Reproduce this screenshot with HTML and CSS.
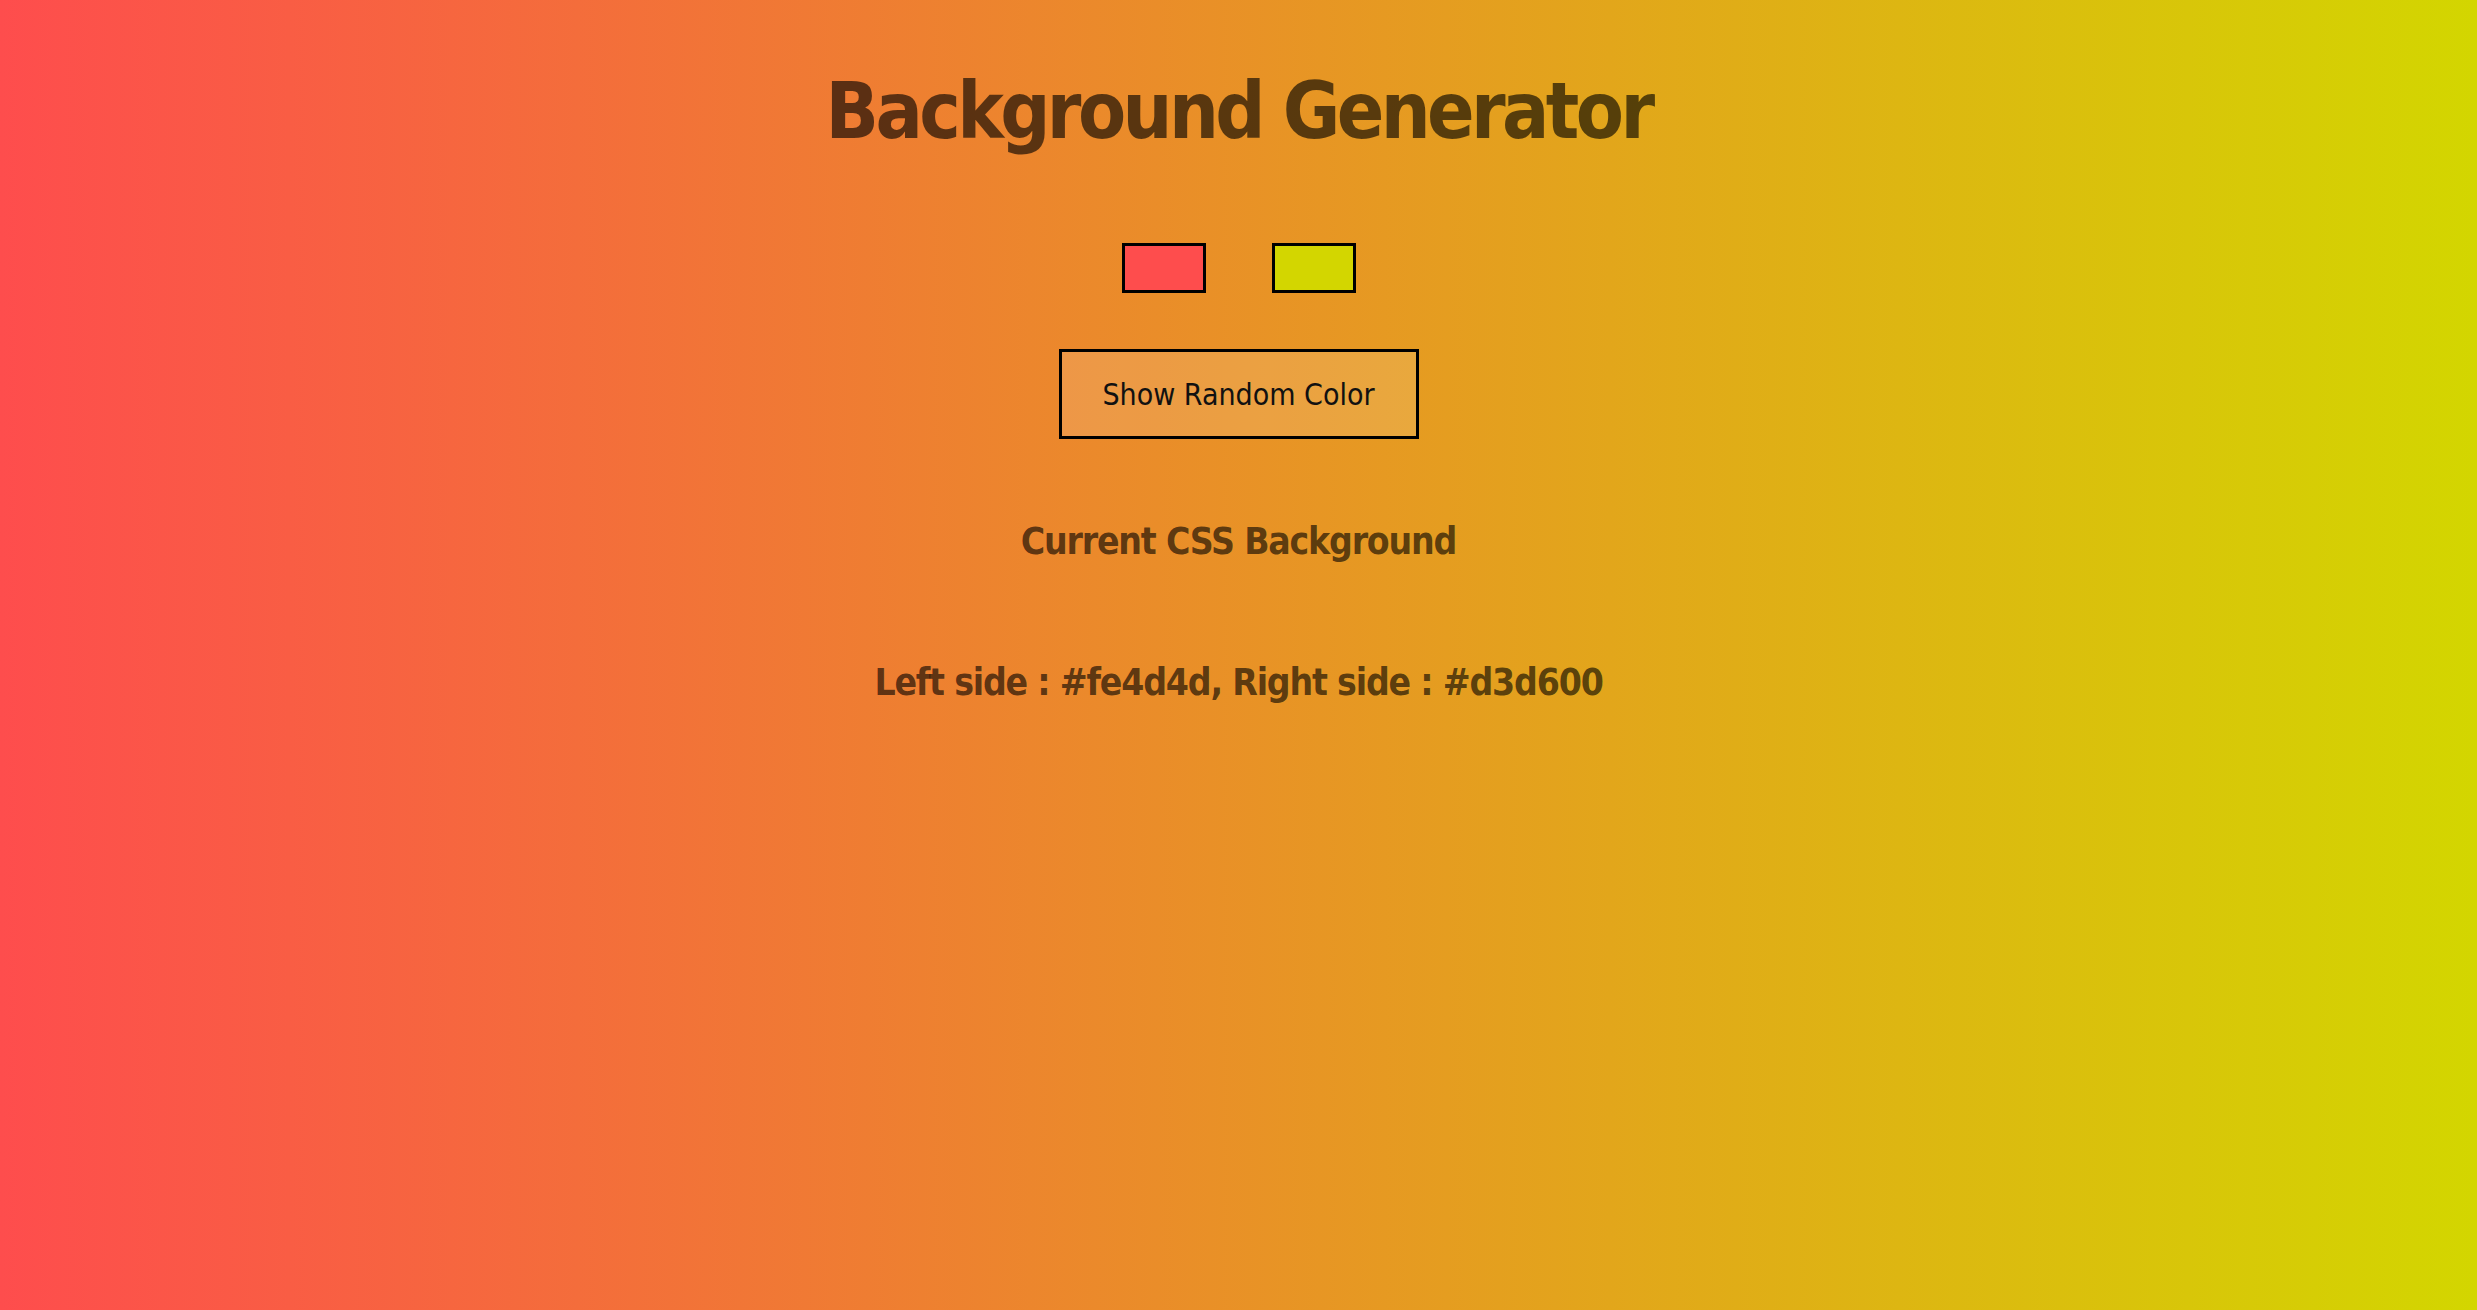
FILE: index.html
```html
<!DOCTYPE html>
<html lang="en">
<head>
<meta charset="utf-8">
<title>Background Generator</title>
<link rel="stylesheet" href="styles.css">
</head>
<body>
<main class="page">
  <h1 class="title">Background Generator</h1>
  <div class="swatches">
    <input class="swatch" type="color" value="#fe4d4d" aria-label="Left color">
    <input class="swatch" type="color" value="#d3d600" aria-label="Right color">
  </div>
  <button class="random-btn" type="button">Show Random Color</button>
  <h3 class="subtitle">Current CSS Background</h3>
  <h3 class="result">Left side : #fe4d4d, Right side : #d3d600</h3>
</main>
</body>
</html>
```
FILE: styles.css
```css
html, body {
  margin: 0;
  padding: 0;
}
body {
  background: linear-gradient(to right, #fe4d4d, #d3d600);
  font-family: "DejaVu Sans Condensed", "Liberation Sans", sans-serif;
  color: rgba(0, 0, 0, 0.62);
  min-height: 1310px;
}
.page {
  display: flex;
  flex-direction: column;
  align-items: center;
  padding-top: 67px;
}
.title {
  margin: 0;
  font-size: 78px;
  line-height: 88px;
  font-weight: 700;
  letter-spacing: -3.6px;
}
.swatches {
  display: flex;
  gap: 66px;
  margin-top: 88px;
}
.swatch {
  -webkit-appearance: none;
  appearance: none;
  width: 84px;
  height: 50px;
  box-sizing: border-box;
  border: 3px solid #000;
  padding: 0;
  margin: 0;
  background: none;
  cursor: pointer;
}
.swatch::-webkit-color-swatch-wrapper {
  padding: 0;
}
.swatch::-webkit-color-swatch {
  border: none;
}
.random-btn {
  margin-top: 56px;
  width: 360px;
  height: 90px;
  box-sizing: border-box;
  border: 3px solid #000;
  background: rgba(255, 255, 255, 0.13);
  color: #111;
  font-family: inherit;
  font-size: 30px;
  font-weight: 400;
  padding: 0;
}
.subtitle, .result {
  margin: 0;
  font-size: 37px;
  line-height: 42px;
  font-weight: 700;
  letter-spacing: -1.2px;
}
.subtitle {
  margin-top: 82px;
}
.result {
  margin-top: 99px;
}
```
